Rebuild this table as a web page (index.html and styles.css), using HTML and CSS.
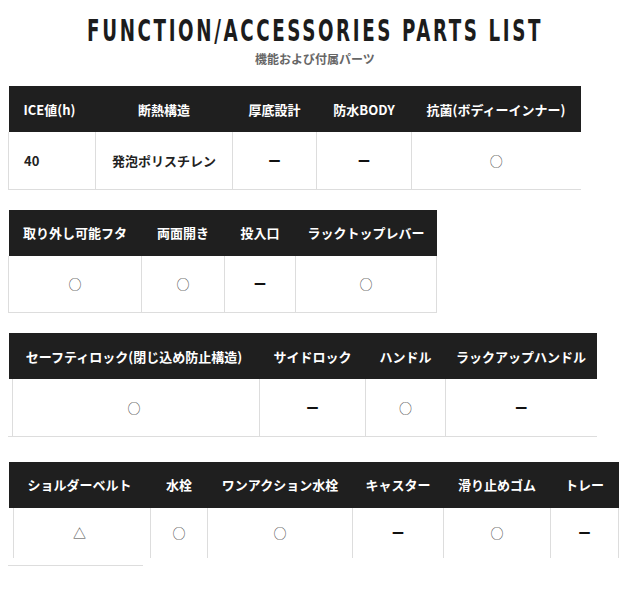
FILE: index.html
```html
<!DOCTYPE html>
<html lang="ja">
<head>
<meta charset="utf-8">
<title>FUNCTION/ACCESSORIES PARTS LIST</title>
<link rel="stylesheet" href="styles.css">
</head>
<body>
<div class="page">
  <h1 class="title"><span class="title-text">FUNCTION/ACCESSORIES PARTS LIST</span></h1>
  <p class="subtitle">機能および付属パーツ</p>

  <table class="spec spec-1">
    <thead>
      <tr><th class="left">ICE値(h)</th><th>断熱構造</th><th>厚底設計</th><th>防水BODY</th><th>抗菌(ボディーインナー)</th></tr>
    </thead>
    <tbody>
      <tr><td class="left strong">40</td><td class="strong">発泡ポリスチレン</td><td class="dash">ー</td><td class="dash">ー</td><td class="mark">○</td></tr>
    </tbody>
  </table>

  <table class="spec spec-2">
    <thead>
      <tr><th>取り外し可能フタ</th><th>両面開き</th><th>投入口</th><th>ラックトップレバー</th></tr>
    </thead>
    <tbody>
      <tr><td class="mark">○</td><td class="mark">○</td><td class="dash">ー</td><td class="mark">○</td></tr>
    </tbody>
  </table>

  <table class="spec spec-3">
    <thead>
      <tr><th>セーフティロック(閉じ込め防止構造)</th><th>サイドロック</th><th>ハンドル</th><th>ラックアップハンドル</th></tr>
    </thead>
    <tbody>
      <tr><td class="mark">○</td><td class="dash">ー</td><td class="mark">○</td><td class="dash">ー</td></tr>
    </tbody>
  </table>

  <table class="spec spec-4">
    <thead>
      <tr><th>ショルダーベルト</th><th>水栓</th><th>ワンアクション水栓</th><th>キャスター</th><th>滑り止めゴム</th><th>トレー</th></tr>
    </thead>
    <tbody>
      <tr><td class="mark">△</td><td class="mark">○</td><td class="mark">○</td><td class="dash">ー</td><td class="mark">○</td><td class="dash">ー</td></tr>
    </tbody>
  </table>
  <div class="tail-line"></div>
</div>
</body>
</html>
```
FILE: styles.css
```css
* { box-sizing: border-box; }
html, body { margin: 0; padding: 0; background: #fff; }
body { overflow: hidden; }
.page {
  padding: 0 8px;
  font-family: "Noto Sans CJK JP", "Noto Sans", sans-serif;
  color: #222;
}
.title {
  margin: 0;
  padding-top: 12px;
  height: 48px;
  text-align: center;
  white-space: nowrap;
  font-family: "DejaVu Sans Condensed", "Liberation Sans", sans-serif;
  font-weight: 700;
  font-size: 31px;
  line-height: 36px;
  letter-spacing: 4px;
  color: #1c1c1c;
}
.title-text {
  display: inline-block;
  transform: scaleX(0.655);
  transform-origin: center;
  margin: 0 -200px;
}
.subtitle {
  margin: 2px 0 0;
  height: 36px;
  text-align: center;
  font-size: 12px;
  line-height: 18px;
  font-weight: 700;
  color: #666;
}
.spec {
  border-collapse: collapse;
  table-layout: fixed;
  white-space: nowrap;
}
.spec th {
  background: #1f1f1f;
  color: #fff;
  font-size: 13px;
  font-weight: 700;
  height: 46px;
  padding: 0;
  text-align: center;
}
.spec td {
  height: 57px;
  padding: 0;
  text-align: center;
  font-size: 13px;
  border-left: 1px solid #ddd;
  border-bottom: 1px solid #ddd;
}
.spec .left { text-align: left; padding-left: 15px; }
.strong { font-weight: 700; color: #222; }
.dash { font-weight: 700; color: #111; font-size: 13px; }
.mark { color: #444; font-size: 14px; font-weight: 400; }

.spec-1 { width: 572px; }
.spec-1 th:nth-child(1) { width: 87px; }
.spec-1 th:nth-child(2) { width: 137px; }
.spec-1 th:nth-child(3) { width: 84px; }
.spec-1 th:nth-child(4) { width: 95px; }
.spec-1 th:nth-child(5) { width: 169px; }

.spec-2 { margin-top: 20px; width: 428px; }
.spec-2 th:nth-child(1) { width: 133px; }
.spec-2 th:nth-child(2) { width: 83px; }
.spec-2 th:nth-child(3) { width: 71px; }
.spec-2 th:nth-child(4) { width: 141px; }
.spec-2 td:last-child { border-right: 1px solid #ddd; }

.spec-3 { margin-top: 20px; width: 588px; }
.spec-3 th:nth-child(1) { width: 251px; }
.spec-3 th:nth-child(2) { width: 106px; }
.spec-3 th:nth-child(3) { width: 80px; }
.spec-3 th:nth-child(4) { width: 151px; }
.spec-3 td:first-child { border-left-color: transparent; box-shadow: inset 3px 0 0 #fff, inset 4px 0 0 #ddd; }

.spec-4 { margin-top: 25px; width: 610px; }
.spec-4 th:nth-child(1) { width: 142px; }
.spec-4 th:nth-child(2) { width: 57px; }
.spec-4 th:nth-child(3) { width: 145px; }
.spec-4 th:nth-child(4) { width: 91px; }
.spec-4 th:nth-child(5) { width: 107px; }
.spec-4 th:nth-child(6) { width: 68px; }
.spec-4 td { height: 50px; border-bottom: none; }
.spec-4 td:first-child { border-left-color: transparent; box-shadow: inset 4px 0 0 #fff, inset 5px 0 0 #ddd; }
.spec-4 td:last-child { border-right: 1px solid #ddd; }
.tail-line {
  width: 135px;
  height: 1px;
  margin-top: 7px;
  background: #ddd;
}
```
